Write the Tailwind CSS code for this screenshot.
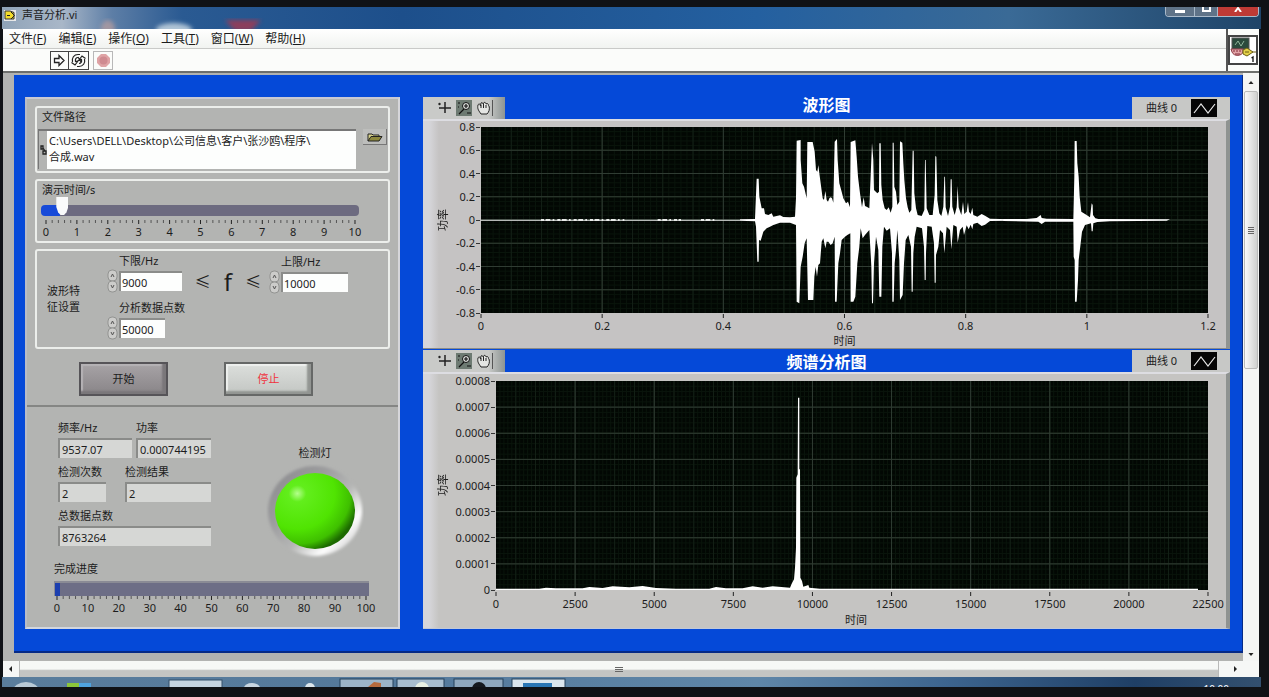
<!DOCTYPE html>
<html lang="zh-CN">
<head>
    <meta charset="UTF-8">
    <meta name="viewport" content="width=device-width, initial-scale=1.0">
    <title>声音分析.vi</title>
    <script src="https://cdn.jsdelivr.net/npm/@tailwindcss/browser@4"></script>
</head>
<body class="h-screen overflow-hidden bg-[#101216] pt-[7px] pr-2 pb-[10px] pl-[2px] font-['Noto_Sans','Noto_Sans_CJK_SC',sans-serif] text-[11px] leading-4 text-[#1c1c1c]">
<div class="flex h-full flex-col">

    <!-- Title bar -->
    <header class="relative flex h-[22px] shrink-0 items-start gap-1 overflow-hidden bg-[linear-gradient(90deg,#8fa3b8_0,#a9b7c8_60px,#5d7ea6_110px,#2a5a92_180px,#1d4f8b_400px,#2460a0_60%,#3a6a96_80%,#1f4468_100%)] pl-[2px]">
        <svg class="mt-[3px] h-[11px] w-3" viewBox="0 0 12 11">
            <rect width="12" height="11" fill="#e8e8e8"/>
            <path d="M1 1h5l4 1.500V9H1z" fill="#f3dc2c" stroke="#333" stroke-width="1"/>
            <path d="M3 5.500h3M7 2l3.500 3.500L7 9" stroke="#222" fill="none"/>
        </svg>
        <h1 class="ml-[2px] leading-4">声音分析.vi</h1>
        <svg class="absolute top-2 left-[90px] h-4 w-44" viewBox="0 0 176 16" aria-hidden="true">
            <defs><filter id="haze"><feGaussianBlur stdDeviation="2"/></filter></defs>
            <g filter="url(#haze)">
                <ellipse cx="16" cy="14" rx="7" ry="9" fill="#c9a49c" opacity=".6"/>
                <ellipse cx="82" cy="15" rx="18" ry="7" fill="#cfdde6" opacity=".8"/>
                <path d="M133 5h36l-10 11h-16z" fill="#a53a50" opacity=".8"/>
            </g>
        </svg>
        <div class="absolute top-0 right-[2px] flex h-[10px] overflow-hidden rounded-b-sm border border-t-0 border-[#a9b9c9]">
            <button aria-label="最小化" class="flex w-7 justify-center bg-[#5f7388]"><span class="mt-[3px] h-[3px] w-[10px] bg-white"></span></button>
            <button aria-label="最大化" class="flex w-6 justify-center border-x border-[#a9b9c9] bg-[#5f7388]"><span class="h-[5px] w-[9px] border-2 border-t-0 border-white"></span></button>
            <button aria-label="关闭" class="flex w-10 justify-center bg-[#bf3a35]">
                <svg class="h-[5px] w-2" viewBox="0 0 8 5"><path d="M1 5l3-4 3 4" stroke="#fff" stroke-width="2" fill="none"/></svg>
            </button>
        </div>
    </header>

    <!-- Menu and toolbar -->
    <div class="mr-[2px] ml-px flex shrink-0 border-b-2 border-[#6d6f6d] bg-[#fbfcfa]">
        <div class="flex-1">
            <nav class="flex h-5 items-center gap-3 border-b border-[#c9cac8] bg-linear-to-b from-white to-[#f1f3f0] pl-[6px] text-xs">
                <a href="#">文件(<u>F</u>)</a>
                <a href="#">编辑(<u>E</u>)</a>
                <a href="#">操作(<u>O</u>)</a>
                <a href="#">工具(<u>T</u>)</a>
                <a href="#">窗口(<u>W</u>)</a>
                <a href="#">帮助(<u>H</u>)</a>
            </nav>
            <div class="flex h-[22px] items-center pl-[47px]">
                <button aria-label="运行" class="flex h-[19px] w-[19px] items-center justify-center border border-[#444]">
                    <svg class="h-[13px] w-[13px]" viewBox="0 0 13 13"><path d="M1.500 4.500H6V1.500l5 5-5 5v-3H1.500z" fill="#fff" stroke="#222" stroke-width="1.300"/></svg>
                </button>
                <button aria-label="连续运行" class="flex h-[19px] w-5 items-center justify-center border border-l-0 border-[#444]">
                    <svg class="h-[15px] w-[15px]" viewBox="0 0 15 15" fill="none" stroke="#222" stroke-width="1.200">
                        <path d="M1.500 9C.5 5 3 1.500 7 1.500M7 4.500C5 4.500 4 6 4.500 8.500L7 8 4 12 .5 9.500M7 1.500h2"/>
                        <path d="M13.500 6c1 4-1.500 7.500-5.500 7.500M8 10.500c2 0 3-1.500 2.500-4L8 7l3-4 3.500 2.500M8 13.500H6M7 4l3 5"/>
                    </svg>
                </button>
                <button aria-label="中止执行" class="ml-1 flex h-[19px] w-5 items-center justify-center border border-[#b8b8b8]">
                    <svg class="h-[15px] w-[15px]" viewBox="0 0 15 15"><path d="M5 1h5l4 4v5l-4 4H5l-4-4V5z" fill="#dfa3a5"/><circle cx="7.500" cy="7.500" r="4" fill="#cf8a90"/></svg>
                </button>
            </div>
        </div>
        <div class="flex items-center border-l-2 border-[#555] pr-px">
            <svg class="h-[30px] w-[30px]" viewBox="0 0 30 30">
                <rect x="1" y="1" width="28" height="28" fill="#fff" stroke="#444" stroke-width="2"/>
                <rect x="4" y="3" width="17" height="11" fill="#2b4a3c" stroke="#555"/>
                <path d="M7 10l3-4 3 5 3-5" fill="none" stroke="#8fb49a"/>
                <path d="M3 14h12v3c-1 4-9 5-11 0z" fill="#e3a5a8" stroke="#8d3c46"/>
                <path d="M5 16h2m1 0h2m1 0h2M7 19h5" stroke="#842c38"/>
                <path d="M15 15l4-2 6 4-6 4-4-2z" fill="#e4d148" stroke="#6c5f14"/>
                <path d="M24 17h4M17 17h4" stroke="#6c5f14"/>
                <path d="M23.500 23l1.500-1v5" fill="none" stroke="#111" stroke-width="1.300"/>
            </svg>
        </div>
    </div>

    <!-- Front panel -->
    <div class="mr-[2px] ml-px flex min-h-0 flex-1">
        <main class="flex min-w-0 flex-1 flex-col bg-[#b2b3b1] pt-[2px] pl-[11px]">
            <div class="flex gap-[23px] border-r border-b-2 border-[#062a86] bg-[#0549d8] pt-[22px] pr-3 pb-[22px] pl-[11px]">

                <!-- Controls -->
                <section class="flex w-[375px] shrink-0 flex-col border-2 border-t-[#c9c9d4] border-r-[#d6d6da] border-b-[#d2d6de] border-l-[#b9bcc6] bg-[#b3b4b2]">
                    <div class="flex flex-col gap-[6px] border-b-2 border-[#858684] px-2 pt-[7px] pb-[9px]">

                        <fieldset class="rounded-[3px] border-2 border-[#eceeeb] px-px pb-[2px]">
                            <label for="path" class="mt-px block pl-1">文件路径</label>
                            <div class="mt-1 flex items-start gap-[7px]">
                                <div class="flex flex-1 border-t-2 border-l border-[#777]">
                                    <svg class="h-[38px] w-2 shrink-0" viewBox="0 0 8 38"><path d="M2 15h2v3H2zM4 20h3v3H4zM4 17l2 3" fill="none" stroke="#222" stroke-width="1.300"/></svg>
                                    <textarea id="path" rows="2" spellcheck="false" class="block h-[38px] w-full resize-none overflow-hidden bg-[#fdfefd] px-[2px] pt-[2px] leading-4">C:\Users\DELL\Desktop\公司信息\客户\张沙鸥\程序\
合成.wav</textarea>
                                </div>
                                <button aria-label="浏览" class="flex h-4 w-6 items-center justify-center border-r border-b border-[#777] bg-[#bdbebc]">
                                    <svg class="h-[10px] w-4" viewBox="0 0 16 10"><path d="M1 9V2h4l1 1h6v2" fill="#d7d28a" stroke="#222"/><path d="M1 9l3-4.500h11L12 9z" fill="#8c873c" stroke="#222"/></svg>
                                </button>
                            </div>
                        </fieldset>

                        <fieldset class="rounded-[3px] border-2 border-[#eceeeb] px-1 pb-px">
                            <label for="seconds" class="mt-px block pl-px">演示时间/s</label>
                            <input id="seconds" type="range" min="0" max="10" step="0.1" value="0.5" class="block h-[19px] w-[318px] appearance-none bg-transparent [&::-webkit-slider-runnable-track]:mt-[6px] [&::-webkit-slider-runnable-track]:h-[11px] [&::-webkit-slider-runnable-track]:rounded-[4px] [&::-webkit-slider-runnable-track]:bg-[linear-gradient(90deg,#174ad8_6%,#6d6b80_6%)] [&::-webkit-slider-thumb]:-mt-2 [&::-webkit-slider-thumb]:h-[18px] [&::-webkit-slider-thumb]:w-3 [&::-webkit-slider-thumb]:appearance-none [&::-webkit-slider-thumb]:bg-[#fafbfb] [&::-webkit-slider-thumb]:[clip-path:polygon(0_0,100%_0,100%_55%,85%_85%,65%_100%,35%_100%,15%_85%,0_55%)]">
                            <div class="mt-[3px] ml-[5px] w-[309px]">
                                <svg data-ticks="50" data-major="5" class="block h-1 w-full overflow-visible" viewBox="0 0 100 4" preserveAspectRatio="none"></svg>
                                <div data-labels="0 1 2 3 4 5 6 7 8 9 10" class="flex justify-between"></div>
                            </div>
                        </fieldset>

                        <fieldset class="flex h-[100px] rounded-[3px] border-2 border-[#eceeeb] pl-[10px]">
                            <div class="mt-8 w-9">波形特<br>征设置</div>
                            <div class="ml-6">
                                <div class="flex">
                                    <div class="w-[76px]">
                                        <label for="low" class="mt-[2px] block pl-3">下限/Hz</label>
                                        <div class="flex items-center gap-px">
                                            <svg class="h-6 w-[11px]" viewBox="0 0 11 24"><rect x="1" y="1" width="9" height="11" rx="4" fill="#ccccca" stroke="#929391"/><rect x="1" y="12" width="9" height="11" rx="4" fill="#ccccca" stroke="#929391"/><path d="M4 8l1.500-3L7 8M4 16l1.500 3L7 16" fill="none" stroke="#555"/></svg>
                                            <input id="low" inputmode="numeric" value="9000" class="h-5 w-[63px] border-t-2 border-l-2 border-[#8b8c8a] bg-[#fdfefd] pl-px">
                                        </div>
                                    </div>
                                    <div class="mt-[18px] flex w-[86px] items-center justify-center gap-[13px] pl-1 text-base leading-6"><span>≤</span><span class="text-2xl leading-6">f</span><span>≤</span></div>
                                    <div>
                                        <label for="high" class="mt-[3px] block pl-3">上限/Hz</label>
                                        <div class="flex items-center gap-px">
                                            <svg class="h-6 w-[11px]" viewBox="0 0 11 24"><rect x="1" y="1" width="9" height="11" rx="4" fill="#ccccca" stroke="#929391"/><rect x="1" y="12" width="9" height="11" rx="4" fill="#ccccca" stroke="#929391"/><path d="M4 8l1.500-3L7 8M4 16l1.500 3L7 16" fill="none" stroke="#555"/></svg>
                                            <input id="high" inputmode="numeric" value="10000" class="h-5 w-[67px] border-t-2 border-l-2 border-[#8b8c8a] bg-[#fdfefd] pl-px">
                                        </div>
                                    </div>
                                </div>
                                <label for="points" class="mt-[6px] block pl-3">分析数据点数</label>
                                <div class="flex items-center gap-px">
                                    <svg class="h-6 w-[11px]" viewBox="0 0 11 24"><rect x="1" y="1" width="9" height="11" rx="4" fill="#ccccca" stroke="#929391"/><rect x="1" y="12" width="9" height="11" rx="4" fill="#ccccca" stroke="#929391"/><path d="M4 8l1.500-3L7 8M4 16l1.500 3L7 16" fill="none" stroke="#555"/></svg>
                                    <input id="points" inputmode="numeric" value="50000" class="h-5 w-[46px] border-t-2 border-l-2 border-[#8b8c8a] bg-[#fdfefd] pl-px">
                                </div>
                            </div>
                        </fieldset>

                        <div class="mt-[7px] flex gap-14 pl-11">
                            <button class="h-[34px] w-[89px] border-2 border-[#565458] bg-linear-to-b from-[#a7a3a6] to-[#898588] shadow-[inset_-4px_-3px_2px_#7a777a,inset_2px_2px_1px_#b5b2b5]">开始</button>
                            <button class="h-[34px] w-[89px] border-2 border-[#666867] bg-linear-to-b from-[#dcdfdc] to-[#c3c6c3] text-[#f0323c] shadow-[inset_-4px_-3px_2px_#929592,inset_2px_2px_1px_#eef0ee]">停止</button>
                        </div>
                    </div>

                    <div class="flex flex-1 flex-col px-[30px] pt-[13px]">
                        <div class="flex">
                            <div class="w-[155px] pl-px">
                                <div class="flex gap-1">
                                    <div><label for="freq" class="block">频率/Hz</label><input id="freq" readonly value="9537.07" class="mt-[2px] block h-5 w-[74px] border-t-2 border-l-2 border-[#8a8b89] bg-[#d6d7d5] pl-[2px]"></div>
                                    <div><label for="power" class="block">功率</label><input id="power" readonly value="0.000744195" class="mt-[2px] block h-5 w-[75px] border-t-2 border-l-2 border-[#8a8b89] bg-[#d6d7d5] pl-[2px]"></div>
                                </div>
                                <div class="mt-[6px] flex gap-[19px]">
                                    <div><label for="times" class="block">检测次数</label><input id="times" readonly value="2" class="mt-[2px] block h-5 w-12 border-t-2 border-l-2 border-[#8a8b89] bg-[#d6d7d5] pl-[2px]"></div>
                                    <div><label for="result" class="block">检测结果</label><input id="result" readonly value="2" class="mt-[2px] block h-5 w-[86px] border-t-2 border-l-2 border-[#8a8b89] bg-[#d6d7d5] pl-[2px]"></div>
                                </div>
                                <label for="total" class="mt-[6px] block">总数据点数</label>
                                <input id="total" readonly value="8763264" class="mt-[2px] block h-5 w-[153px] border-t-2 border-l-2 border-[#8a8b89] bg-[#d6d7d5] pl-[2px]">
                            </div>
                            <div class="mt-[25px] ml-[54px] flex flex-col items-center">
                                <span>检测灯</span>
                                <svg class="mt-[3px] h-[96px] w-[98px]" viewBox="0 0 98 96">
                                    <defs>
                                        <linearGradient id="ring" x1=".1" y1=".1" x2=".9" y2=".85">
                                            <stop offset="0" stop-color="#8e8e90"/><stop offset=".3" stop-color="#9c9c9e"/><stop offset=".6" stop-color="#b5b6b5"/><stop offset=".85" stop-color="#fdfdfd"/><stop offset="1" stop-color="#d8d8d8"/>
                                        </linearGradient>
                                        <radialGradient id="led" cx=".28" cy=".27" r=".78">
                                            <stop offset="0" stop-color="#b4ff8c"/><stop offset=".14" stop-color="#62ee1c"/><stop offset=".6" stop-color="#50e402"/><stop offset=".85" stop-color="#3fc000"/><stop offset="1" stop-color="#1c6a00"/>
                                        </radialGradient>
                                        <filter id="soft"><feGaussianBlur stdDeviation="1.500"/></filter>
                                    </defs>
                                    <ellipse cx="49" cy="47" rx="47" ry="45" fill="url(#ring)" filter="url(#soft)"/>
                                    <ellipse cx="49" cy="47" rx="40" ry="38" fill="url(#led)"/>
                                </svg>
                            </div>
                        </div>
                        <label for="progress" class="mt-px -ml-[3px] block">完成进度</label>
                        <progress id="progress" max="100" value="1.6" class="mt-1 -ml-[3px] block h-[15px] w-[315px] appearance-none border-t-2 border-l border-[#8a8b95] [&::-webkit-progress-bar]:bg-[#6d6e86] [&::-webkit-progress-value]:bg-[#1c3faf]"></progress>
                        <div class="w-[309px]">
                            <svg data-ticks="50" data-major="5" class="block h-1 w-full overflow-visible" viewBox="0 0 100 4" preserveAspectRatio="none"></svg>
                            <div data-labels="0 10 20 30 40 50 60 70 80 90 100" class="flex justify-between"></div>
                        </div>
                    </div>
                </section>

                <!-- Graphs -->
                <div class="flex min-w-0 flex-1 flex-col gap-px">
                    <section>
                        <div class="flex h-[22px]">
                            <div data-palette class="flex w-[82px] items-center bg-linear-to-r from-[#c9cac8] from-80% to-[#8d9492] pl-[13px]"></div>
                            <h2 class="flex-1 pl-4 text-center text-base leading-4 font-bold text-white">波形图</h2>
                            <div data-legend class="flex w-[98px] items-center gap-[14px] bg-[#c7c8c6] pl-[14px]"></div>
                        </div>
                        <div class="border-t-2 border-r-4 border-b border-t-[#dddde2] border-r-[#8f9391] border-b-[#8a8b89] bg-[linear-gradient(90deg,#d6d6da_6px,#c5c3c3_16px)] pt-[6px] pr-[18px] pl-3">
                            <div class="flex h-[186px]">
                                <span class="w-4 rotate-180 text-center [text-orientation:sideways] [writing-mode:vertical-rl]">功率</span>
                                <div data-ylabels="0.8 0.6 0.4 0.2 0 -0.2 -0.4 -0.6 -0.8" class="flex w-[30px] flex-col justify-between"></div>
                                <svg id="wave" class="min-w-0 flex-1 bg-[#020703]" viewBox="0 0 2181 558" preserveAspectRatio="none">
                                    <g data-grid="6 8"></g>
                                    <path d="M0 278H777V281H0z" fill="#e8eae8"/>
                                    <path d="M180 279H430M530 279H600M660 279H700" fill="none" stroke="#e8eae8" stroke-width="6" stroke-dasharray="9 5 14 7 5 9"/>
                                    <path transform="translate(777 -21)" fill="#fff" d="M0 298L45 297 50 176 56 176 58 230 65 265 72 265 75 282 85 285 95 280 100 290 120 286 130 291 150 292 165 290 168 235 170 62 182 60 182 120 187 190 192 200 200 235 202 66 218 66 224 95 228 150 232 155 235 135 238 160 242 190 248 235 252 240 256 213 260 240 264 245 268 235 272 232 276 235 280 248 284 65 291 57 293 120 298 190 305 215 310 235 318 250 324 245 330 262 332 66 346 61 350 110 354 170 360 220 366 262 371 232 375 258 380 260 388 265 390 215 396 68 400 120 402 210 412 220 417 215 418 70 422 70 424 195 428 240 434 265 440 270 446 262 452 278 457 260 458 68 461 68 463 200 468 215 472 255 478 245 480 64 487 68 490 130 493 180 498 235 503 262 508 278 514 270 518 92 521 92 523 220 528 265 533 285 545 288 553 270 555 120 557 120 560 265 568 285 578 285 584 225 586 108 589 110 592 240 598 280 604 288 610 260 613 170 615 170 617 262 624 288 630 260 632 178 635 178 637 260 644 285 650 262 653 197 656 262 664 285 669 245 673 282 680 275 684 246 687 275 692 282 697 263 700 285 712 290 725 282 735 287 750 296 810 298 810 302 750 303 735 314 725 318 712 308 700 312 697 328 692 314 686 328 680 316 672 345 668 320 660 330 653 368 650 320 640 315 634 388 630 330 620 320 613 400 609 340 600 330 595 380 588 405 587 488 584 488 582 370 575 320 562 318 558 400 557 480 554 480 552 380 546 325 530 320 524 350 520 400 518 515 515 515 513 380 505 345 497 360 492 430 488 525 480 540 478 420 472 330 468 390 464 430 461 545 457 545 456 400 450 325 440 332 432 320 427 380 424 530 418 530 415 390 408 350 402 430 399 550 396 550 394 440 388 330 375 345 368 355 362 325 358 380 352 430 346 530 340 545 332 545 331 340 322 345 315 350 305 360 300 400 295 430 290 545 285 545 284 350 278 370 272 375 265 365 260 365 256 385 250 355 245 365 240 430 235 435 231 470 227 440 223 470 220 540 204 540 200 355 194 370 188 410 182 440 178 550 170 545 168 315 150 308 120 308 100 315 90 320 80 325 70 335 62 362 57 360 56 425 52 425 48 320 45 304 0 302z"/>
                                    <path transform="translate(1587 -111)" fill="#fff" d="M-20 387L50 387 80 384 92 375 95 384 110 386 190 387 193 260 194 153 200 153 202 220 206 260 209 320 214 365 225 372 240 382 245 340 248 345 249 375 256 385 265 387 480 388 470 392 300 394 262 396 250 400 248 424 245 424 243 400 225 405 216 425 212 460 206 510 204 570 200 635 195 635 194 510 191 500 190 395 105 395 95 402 85 395-20 393z"/>
                                </svg>
                            </div>
                            <div class="pl-[46px]">
                                <svg data-ticks="6" data-major="1" class="mt-px block h-1 w-full overflow-visible" viewBox="0 0 100 4" preserveAspectRatio="none"></svg>
                                <div data-labels="0 0.2 0.4 0.6 0.8 1 1.2" class="flex justify-between"></div>
                                <p class="text-center leading-[14px]">时间</p>
                            </div>
                        </div>
                    </section>

                    <section class="flex flex-1 flex-col">
                        <div class="flex h-[22px]">
                            <div data-palette class="flex w-[82px] items-center bg-linear-to-r from-[#c9cac8] from-80% to-[#8d9492] pl-[13px]"></div>
                            <h2 class="flex-1 pl-4 text-center text-base leading-6 font-bold text-white">频谱分析图</h2>
                            <div data-legend class="flex w-[98px] items-center gap-[14px] bg-[#c7c8c6] pl-[14px]"></div>
                        </div>
                        <div class="flex-1 border-t-2 border-r-4 border-b border-t-[#dddde2] border-r-[#8f9391] border-b-[#c0c8d8] bg-[linear-gradient(90deg,#d6d6da_6px,#c5c4c2_16px)] pt-[7px] pr-[18px] pl-3">
                            <div class="flex h-[209px]">
                                <span class="w-4 rotate-180 text-center [text-orientation:sideways] [writing-mode:vertical-rl]">功率</span>
                                <div data-ylabels="0.0008 0.0007 0.0006 0.0005 0.0004 0.0003 0.0002 0.0001 0" class="flex w-[45px] flex-col justify-between"></div>
                                <svg id="spectrum" class="min-w-0 flex-1 bg-[#020703]" viewBox="0 0 2136 627" preserveAspectRatio="none">
                                    <g data-grid="9 8"></g>
                                    <path d="M0 623H130L150 620 180 622H260L280 618 320 621 350 616 400 619 440 615 480 621 540 623H640L660 618 690 622H740L770 616 800 620 830 616 882 620 887 608 894 595 897 560 900 500 901 290 905 280 906 50H910V265H912L913 590 918 600 922 617 937 612 940 620 972 623H2106V627H0z" fill="#fff"/>
                                </svg>
                            </div>
                            <div class="pl-[61px]">
                                <svg data-ticks="9" data-major="1" class="mt-[2px] block h-1 w-full overflow-visible" viewBox="0 0 100 4" preserveAspectRatio="none"></svg>
                                <div data-labels="0 2500 5000 7500 10000 12500 15000 17500 20000 22500" class="flex justify-between"></div>
                                <p class="pl-2 text-center leading-4">时间</p>
                            </div>
                        </div>
                    </section>
                </div>
            </div>
        </main>

        <!-- Vertical scrollbar -->
        <div class="flex w-4 flex-col items-center bg-[#f4f5f4]">
            <svg class="mt-1 h-3 w-2" viewBox="0 0 8 12"><path d="M1.500 7L4 4l2.500 3z" fill="#222"/></svg>
            <div class="mt-[2px] flex h-[278px] w-[14px] flex-col items-center justify-center gap-px rounded-xs border border-[#b9bab9] bg-linear-to-r from-[#fafafa] to-[#cfd0cf]">
                <span class="h-px w-[6px] bg-[#666]"></span><span class="h-px w-[6px] bg-[#666]"></span><span class="h-px w-[6px] bg-[#666]"></span><span class="h-px w-[6px] bg-[#666]"></span>
            </div>
            <svg class="mt-auto mb-[2px] h-[10px] w-2" viewBox="0 0 8 10"><path d="M1.500 4L4 7l2.500-3z" fill="#222"/></svg>
        </div>
    </div>

    <!-- Horizontal scrollbar -->
    <div class="mr-[2px] ml-px flex h-4 shrink-0 items-center bg-[#f6f7f6]">
        <svg class="h-2 w-4" viewBox="0 0 16 8"><path d="M9 1L6 4l3 3z" fill="#222"/></svg>
        <div class="flex h-4 flex-1 items-center justify-center gap-px border-x border-[#b9bab9] bg-linear-to-b from-[#f6f8f6] from-50% to-[#c4c5c3] to-60%">
            <span class="flex flex-col gap-px"><span class="h-px w-2 bg-[#666]"></span><span class="h-px w-2 bg-[#666]"></span><span class="h-px w-2 bg-[#666]"></span></span>
        </div>
        <svg class="mr-2 h-2 w-8" viewBox="0 0 32 8"><path d="M15 1l3 3-3 3z" fill="#222"/></svg>
    </div>

    <!-- Taskbar -->
    <footer class="flex h-[10px] shrink-0 overflow-hidden bg-[linear-gradient(90deg,#5a7d9c,#54799b_30%,#5f86a8_60%,#3d658f_75%,#1f3f66_90%,#33506f)]">
        <svg class="h-[10px] w-[600px]" viewBox="0 0 600 10" aria-hidden="true">
            <ellipse cx="24" cy="14" rx="13" ry="9" fill="#b9cad6"/>
            <path d="M65 10V6h12v4z" fill="#8cc63a"/><path d="M77 10V6h12v4z" fill="#4fa3df"/>
            <rect x="167" y="3" width="53" height="9" fill="#c5d4e0" stroke="#34506a"/>
            <ellipse cx="250" cy="11" rx="8" ry="5" fill="#c8d6e1"/>
            <circle cx="308" cy="11" r="5" fill="#dce6ec"/>
            <rect x="338" y="2" width="53" height="10" fill="#9db4c8" stroke="#24405a"/><path d="M366 10l6-5 7 1v4z" fill="#b66a3d"/>
            <rect x="395" y="2" width="47" height="10" fill="#a9bed0" stroke="#24405a"/><circle cx="420" cy="12" r="7" fill="#e9f0e4"/>
            <rect x="452" y="2" width="49" height="10" fill="#8fa8be" stroke="#24405a"/><circle cx="477" cy="12" r="7" fill="#15191f"/>
            <rect x="510" y="2" width="53" height="10" fill="#dbe6ee" stroke="#24405a"/><rect x="521" y="6" width="29" height="5" fill="#2a76b4"/>
        </svg>
        <span class="mt-[6px] mr-8 ml-auto text-[10px] leading-3 text-white">10:00</span>
    </footer>
</div>

<script>
    const fillAll = (selector, fn) => document.querySelectorAll(selector).forEach(fn);

    fillAll("[data-labels]", el => {
        el.innerHTML = el.dataset.labels.split(" ").map(t => `<span class="flex w-0 justify-center">${t}</span>`).join("");
    });

    fillAll("[data-ylabels]", el => {
        el.innerHTML = el.dataset.ylabels.split(" ").map(t =>
            `<span class="flex h-0 items-center justify-end gap-px">${t}<i class="mr-px h-px w-1 bg-[#333]"></i></span>`).join("");
    });

    fillAll("[data-ticks]", el => {
        const n = +el.dataset.ticks, major = +el.dataset.major;
        let out = "";
        for (let i = 0; i <= n; i++) {
            const x = i * 100 / n;
            out += `<path d="M${x} 0V${i % major ? 3 : 4}" stroke="${i % major ? "#555" : "#222"}" vector-effect="non-scaling-stroke"/>`;
        }
        el.innerHTML = out;
    });

    // minor lines first so that the major ones stay on top
    fillAll("[data-grid]", el => {
        const [cols, rows] = el.dataset.grid.split(" ").map(Number);
        const box = el.ownerSVGElement.viewBox.baseVal;
        const lines = (c, r, colour) => {
            let d = "";
            for (let i = 1; i < c; i++) d += `M${i * box.width / c} 0v${box.height}`;
            for (let i = 1; i < r; i++) d += `M0 ${i * box.height / r}h${box.width}`;
            return `<path d="${d}" stroke="${colour}" fill="none" vector-effect="non-scaling-stroke"/>`;
        };
        el.innerHTML = lines(cols * 20, rows * 5, "#0a150c") + lines(cols * 4, rows, "#142017") + lines(cols, rows, "#303c33");
    });

    fillAll("[data-palette]", el => {
        el.innerHTML = `
            <button aria-label="光标" class="mr-1"><svg class="h-4 w-4" viewBox="0 0 16 16"><path d="M9 2v11M3 8h12" stroke="#222" stroke-width="1.500"/><circle cx="3.500" cy="4" r="1.200" fill="#222"/></svg></button>
            <button aria-label="缩放" class="mr-1 bg-[#6d7a72]"><svg class="h-4 w-4" viewBox="0 0 16 16"><circle cx="10" cy="6" r="3.500" fill="#d9dcd9" stroke="#111"/><path d="M10 4v4M8 6h4M8 9l-5 5M2 3h2M2 7h1M11 13h4" stroke="#111" stroke-width="1.200"/></svg></button>
            <button aria-label="平移" class="border-r border-[#555]"><svg class="h-4 w-4" viewBox="0 0 16 16"><path d="M5 14C3 11 1 9 2 5c1-2 2-1 2.500 1L5 3c1-1 2 0 2 1l1-1.500c1-.5 2 .5 2 1.500l1-.5c1 0 1.500 1 1.500 2L13 6c1 3 0 6-2 8z" fill="#e4e5e3" stroke="#222"/><path d="M5 8V5M7.500 8V4M10 8V5" stroke="#222"/></svg></button>`;
    });

    fillAll("[data-legend]", el => {
        el.innerHTML = `<span>曲线 0</span><svg class="h-[18px] w-[26px]" viewBox="0 0 26 18"><rect width="26" height="18" fill="#050505"/><path d="M3 14l7-9 7 9 7-9" fill="none" stroke="#e8e8e8" stroke-width="1.200"/></svg>`;
    });
</script>
</body>
</html>
